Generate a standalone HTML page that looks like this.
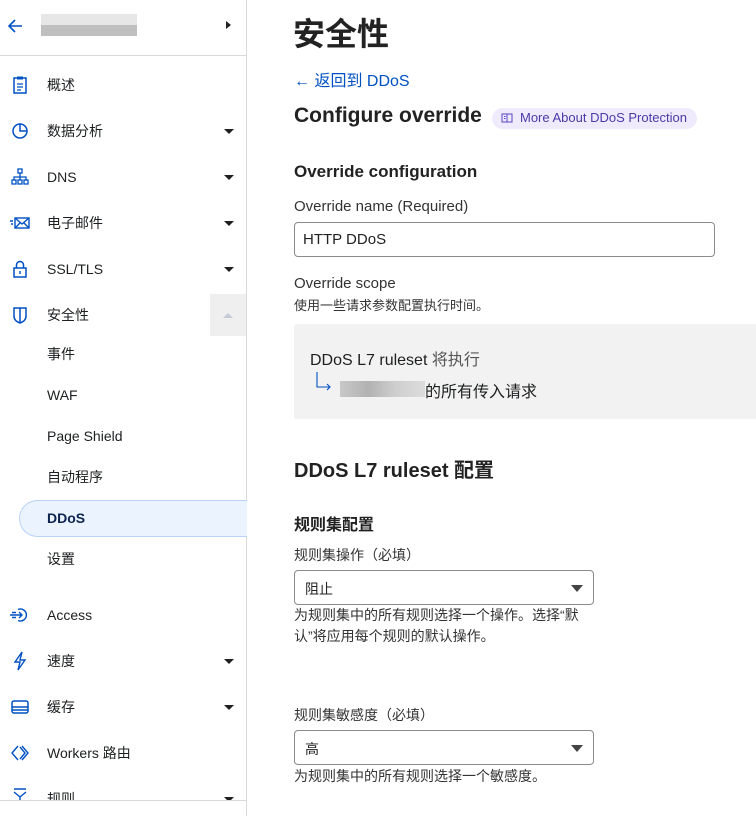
<!DOCTYPE html>
<html><head><meta charset="utf-8"><style>
*{box-sizing:border-box;margin:0;padding:0}
body{width:756px;height:816px;overflow:hidden;background:#fff;font-family:"Liberation Sans","Noto Sans CJK SC",sans-serif;color:#222;position:relative}
.sb{position:absolute;left:0;top:0;width:247px;height:816px;border-right:1px solid #d9d9d9}
.hdr{position:absolute;left:0;top:0;width:246px;height:56px;border-bottom:1px solid #d9d9d9}
.it{position:absolute;left:47px;font-size:14px;color:#1d1f20;line-height:20px}
.ic{position:absolute;left:10px;width:20px;height:20px}
.car{position:absolute;left:224px;width:0;height:0;border-left:5px solid transparent;border-right:5px solid transparent;border-top:5px solid #1d1f20}
.a{position:absolute;white-space:nowrap}
.inp{position:absolute;border:1px solid #8a8a8a;border-radius:4px;background:#fff}
.sel:after{content:"";position:absolute;right:10px;top:14px;border-left:6px solid transparent;border-right:6px solid transparent;border-top:7px solid #444}
</style></head><body>
<div class="sb">
 <div class="hdr">
  <svg style="position:absolute;left:6px;top:17px" width="18" height="18" viewBox="0 0 18 18"><path d="M16 9H3M9 3L3 9l6 6" fill="none" stroke="#0051c3" stroke-width="1.6"/></svg>
  <div style="position:absolute;left:41px;top:14px;width:96px;height:22px;background:linear-gradient(#e4e4e4 50%,#b8b8b8 50%);opacity:.9"></div>
  <div style="position:absolute;left:226px;top:21px;border-top:4px solid transparent;border-bottom:4px solid transparent;border-left:5px solid #222"></div>
 </div>
 <svg class="ic" style="top:75px" viewBox="0 0 20 20"><rect x="4" y="3" width="12" height="15" fill="none" stroke="#0051c3" stroke-width="1.5"/><rect x="7" y="1.5" width="6" height="3" fill="#0051c3"/><path d="M7 9h6M7 12h6M7 15h4" stroke="#0051c3" stroke-width="1.3"/></svg>
 <div class="it" style="top:75px">概述</div>
 <svg class="ic" style="top:121px" viewBox="0 0 20 20"><circle cx="10" cy="10" r="7" fill="none" stroke="#0051c3" stroke-width="1.5"/><path d="M10 3v7h7" fill="none" stroke="#0051c3" stroke-width="1.5"/></svg>
 <div class="it" style="top:121px">数据分析</div><div class="car" style="top:129px"></div>
 <svg class="ic" style="top:167px" viewBox="0 0 20 20"><g fill="none" stroke="#0051c3" stroke-width="1.3"><rect x="8" y="2" width="4" height="4"/><rect x="2" y="13" width="4" height="4"/><rect x="8" y="13" width="4" height="4"/><rect x="14" y="13" width="4" height="4"/><path d="M10 6v7M4 13v-3h12v3"/></g></svg>
 <div class="it" style="top:167px">DNS</div><div class="car" style="top:175px"></div>
 <svg class="ic" style="top:213px" viewBox="0 0 20 20"><g fill="none" stroke="#0051c3" stroke-width="1.4"><rect x="5" y="5" width="14" height="10"/><path d="M5 5l7 6 7-6M5 15l5-5M19 15l-5-5M0 8h3M1 11h2"/></g></svg>
 <div class="it" style="top:213px">电子邮件</div><div class="car" style="top:221px"></div>
 <svg class="ic" style="top:259px" viewBox="0 0 20 20"><g fill="none" stroke="#0051c3" stroke-width="1.5"><rect x="4" y="9" width="12" height="9"/><path d="M6.5 9V6a3.5 3.5 0 017 0v3"/></g><rect x="9.3" y="12" width="1.4" height="3" fill="#0051c3"/></svg>
 <div class="it" style="top:259px">SSL/TLS</div><div class="car" style="top:267px"></div>
 <svg class="ic" style="top:305px" viewBox="0 0 20 20"><g fill="none" stroke="#0051c3" stroke-width="1.5"><path d="M4 3h12v8c0 4-3 6-6 7-3-1-6-3-6-7z"/><path d="M10 3v15"/></g></svg>
 <div class="it" style="top:305px">安全性</div>
 <div style="position:absolute;left:210px;top:294px;width:36px;height:42px;background:#efefef"></div>
 <div style="position:absolute;left:223px;top:313px;border-left:5px solid transparent;border-right:5px solid transparent;border-bottom:5px solid #c5ccd6"></div>
 <div class="it" style="top:344px">事件</div>
 <div class="it" style="top:385px">WAF</div>
 <div class="it" style="top:426px">Page Shield</div>
 <div class="it" style="top:467px">自动程序</div>
 <div style="position:absolute;left:19px;top:500px;width:228px;height:37px;background:#ebf3fe;border:1px solid #b9d3f7;border-right:none;border-radius:19px 0 0 19px"></div>
 <div class="it" style="top:508px;font-weight:bold;color:#0d2350">DDoS</div>
 <div class="it" style="top:549px">设置</div>
 <svg class="ic" style="top:605px" viewBox="0 0 20 20"><g fill="none" stroke="#0051c3" stroke-width="1.4"><path d="M8 4.5A6 6 0 1 1 8 15.5"/><path d="M0 10h12M9 7l3 3-3 3M2 7.5h4M2 12.5h4"/></g></svg>
 <div class="it" style="top:605px">Access</div>
 <svg class="ic" style="top:651px" viewBox="0 0 20 20"><path d="M12 1L5 11h5l-2 8 7-10h-5z" fill="none" stroke="#0051c3" stroke-width="1.4"/></svg>
 <div class="it" style="top:651px">速度</div><div class="car" style="top:659px"></div>
 <svg class="ic" style="top:697px" viewBox="0 0 20 20"><g fill="none" stroke="#0051c3" stroke-width="1.5"><rect x="2" y="4" width="16" height="12" rx="2"/><path d="M2 10h16M2 13h16"/></g></svg>
 <div class="it" style="top:697px">缓存</div><div class="car" style="top:705px"></div>
 <svg class="ic" style="top:743px" viewBox="0 0 20 20"><path d="M8 3l-6 7 6 7M12 3l6 7-6 7M10 4l5 6-5 6" fill="none" stroke="#0051c3" stroke-width="1.4"/></svg>
 <div class="it" style="top:743px">Workers 路由</div>
 <svg class="ic" style="top:787px" viewBox="0 0 20 20"><path d="M4 2h12M4 5l6 5 6-5M10 10v6" fill="none" stroke="#0051c3" stroke-width="1.4"/></svg>
 <div class="it" style="top:789px">规则</div><div class="car" style="top:797px"></div>
 <div style="position:absolute;left:0;top:800px;width:246px;height:16px;background:#fff;border-top:1px solid #d9d9d9"></div>
</div>

<div class="a" style="left:293px;top:9px;font-size:32px;font-weight:bold;color:#222">安全性</div>
<div class="a" style="left:294px;top:67px;font-size:16px;color:#0051c3">← 返回到 DDoS</div>
<div class="a" style="left:294px;top:104px;font-size:21px;font-weight:bold;color:#222">Configure override</div>
<div class="a" style="left:492px;top:108px;width:205px;height:21px;background:#efebfd;border-radius:11px"></div>
<svg class="a" style="left:501px;top:112px" width="12" height="12" viewBox="0 0 12 12"><g fill="none" stroke="#5b45c4" stroke-width="1"><rect x="1" y="2" width="10" height="8"/><path d="M6 2v8M3 4.5h1.5M3 6.5h1.5"/></g></svg>
<div class="a" style="left:520px;top:110px;font-size:13px;color:#4b3aa8">More About DDoS Protection</div>
<div class="a" style="left:294px;top:162px;font-size:17px;font-weight:bold;color:#222">Override configuration</div>
<div class="a" style="left:294px;top:198px;font-size:15px;color:#333">Override name (Required)</div>
<div class="inp" style="left:294px;top:222px;width:421px;height:35px"></div>
<div class="a" style="left:303px;top:231px;font-size:15px;color:#222">HTTP DDoS</div>
<div class="a" style="left:294px;top:275px;font-size:15px;color:#333">Override scope</div>
<div class="a" style="left:294px;top:295px;font-size:13px;color:#333">使用一些请求参数配置执行时间。</div>
<div class="a" style="left:294px;top:324px;width:462px;height:95px;background:#f2f2f2;border-radius:3px 0 0 3px"></div>
<div class="a" style="left:310px;top:346px;font-size:16px;color:#1d1f20">DDoS L7 ruleset <span style="color:#555">将执行</span></div>
<svg class="a" style="left:316px;top:371px" width="16" height="20" viewBox="0 0 16 20"><path d="M1 1v15h13M11 13l3 3-3 3" fill="none" stroke="#0051c3" stroke-width="1.1"/></svg>
<div class="a" style="left:340px;top:381px;width:85px;height:16px;background:linear-gradient(90deg,#c8c8c8,#b2b2b2,#cfcfcf,#dcdcdc)"></div>
<div class="a" style="left:425px;top:378px;font-size:16px;color:#1d1f20">的所有传入请求</div>
<div class="a" style="left:294px;top:454px;font-size:20px;font-weight:bold;color:#222">DDoS L7 ruleset 配置</div>
<div class="a" style="left:294px;top:511px;font-size:16px;font-weight:bold;color:#222">规则集配置</div>
<div class="a" style="left:294px;top:545px;font-size:14px;color:#333">规则集操作（必填）</div>
<div class="inp sel" style="left:294px;top:570px;width:300px;height:35px"></div>
<div class="a" style="left:305px;top:579px;font-size:14px;color:#222">阻止</div>
<div class="a" style="left:294px;top:605px;width:300px;white-space:normal;font-size:14px;line-height:21px;color:#333">为规则集中的所有规则选择一个操作。选择“默认”将应用每个规则的默认操作。</div>
<div class="a" style="left:294px;top:705px;font-size:14px;color:#333">规则集敏感度（必填）</div>
<div class="inp sel" style="left:294px;top:730px;width:300px;height:35px"></div>
<div class="a" style="left:305px;top:739px;font-size:14px;color:#222">高</div>
<div class="a" style="left:294px;top:766px;font-size:14px;color:#333">为规则集中的所有规则选择一个敏感度。</div>
</body></html>
